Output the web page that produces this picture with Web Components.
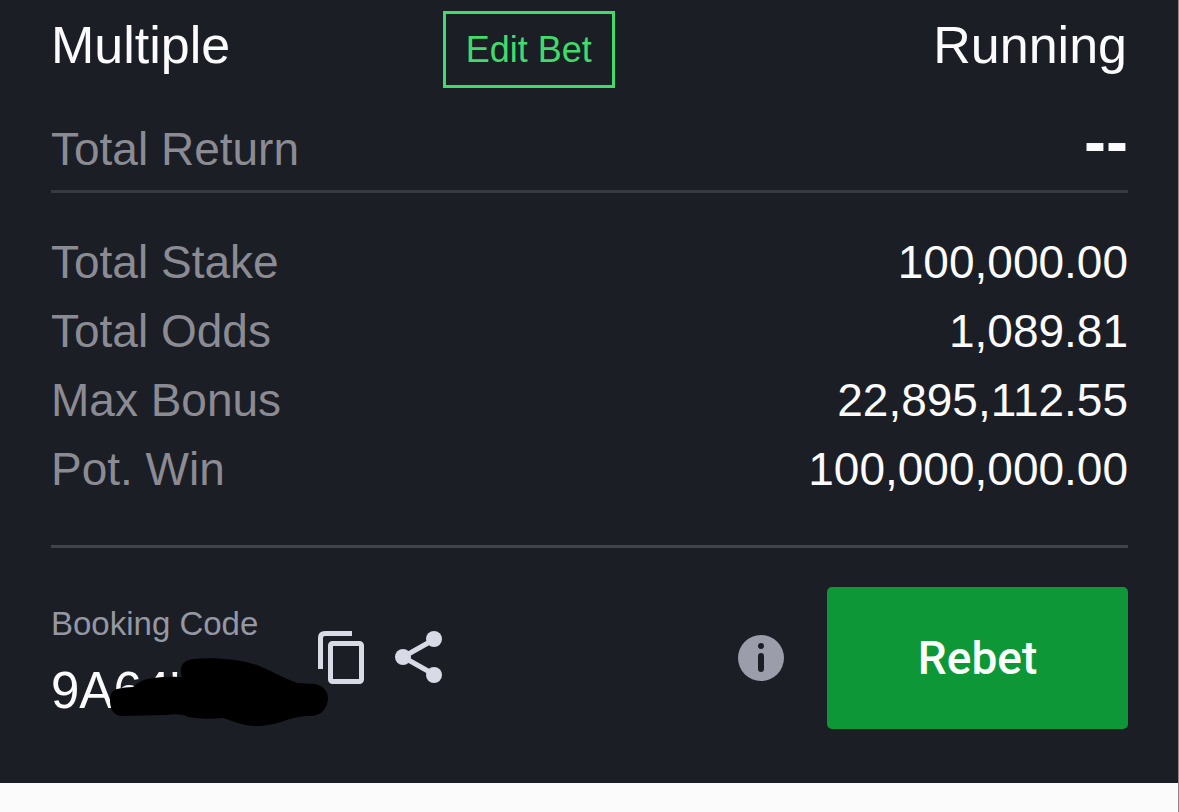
<!DOCTYPE html>
<html lang="en">
<head>
<meta charset="utf-8">
<meta name="viewport" content="width=device-width">
<title>Bet details</title>
<style>
body { margin: 0; box-sizing: border-box; min-height: 100vh; border-right: 1px solid #8a8a8a; background: #fbfbfb; color: #fbfbfd; font-family: "Liberation Sans", Arial, sans-serif; }
</style>
</head>
<body>
<bet-ticket>
  <ticket-header slot="header" status="Running">Multiple</ticket-header>
  <amount-row slot="return" emphasis label="Total Return">--</amount-row>
  <amount-row label="Total Stake">100,000.00</amount-row>
  <amount-row label="Total Odds">1,089.81</amount-row>
  <amount-row label="Max Bonus">22,895,112.55</amount-row>
  <amount-row label="Pot. Win">100,000,000.00</amount-row>
  <booking-bar slot="footer" label="Booking Code">9A64'</booking-bar>
</bet-ticket>

<script>
const mount = (el, html) => { el.attachShadow({ mode: "open" }).innerHTML = html; };

customElements.define("bet-ticket", class extends HTMLElement {
  constructor() {
    super();
    mount(this, `<style>
      :host { display: block; margin-right: -1px; background: #1c1e26; padding: 11px 51px 55px; }
      .return { margin-top: 27px; padding-bottom: 6px; border-bottom: 3px solid #383a43; }
      .amounts { padding: 35px 0 41px; border-bottom: 3px solid #41434b; }
      .footer { padding-top: 39px; }
    </style>
    <slot name="header"></slot>
    <div class="return"><slot name="return"></slot></div>
    <div class="amounts"><slot></slot></div>
    <div class="footer"><slot name="footer"></slot></div>`);
  }
});

customElements.define("ticket-header", class extends HTMLElement {
  constructor() {
    super();
    mount(this, `<style>
      :host { display: grid; grid-template-columns: 4fr 7fr; font-size: 52px; line-height: 68px; }
      h1 { margin: 0; font: inherit; }
      .side { display: flex; justify-content: space-between; align-items: flex-start; padding-right: 1px; }
      button { box-sizing: border-box; height: 77px; padding: 0 20px; border: 3px solid #3fdc6c; background: none;
        color: #3fdc6c; font: 36px "Liberation Sans", Arial, sans-serif; white-space: nowrap; }
    </style>
    <h1><slot></slot></h1>
    <div class="side"><button type="button">Edit Bet</button><span id="status"></span></div>`);
  }
  connectedCallback() { this.shadowRoot.getElementById("status").textContent = this.getAttribute("status"); }
});

customElements.define("amount-row", class extends HTMLElement {
  constructor() {
    super();
    mount(this, `<style>
      :host { display: flex; justify-content: space-between; font-size: 46px; line-height: 69px; height: 69px; }
      #label { color: #8b8b94; }
      :host([emphasis]) .value { font-size: 66px; line-height: 52px; font-weight: 700; }
    </style>
    <span id="label"></span><span class="value"><slot></slot></span>`);
  }
  connectedCallback() { this.shadowRoot.getElementById("label").textContent = this.getAttribute("label"); }
});

customElements.define("icon-button", class extends HTMLElement {
  constructor() {
    super();
    mount(this, `<style>
      :host { display: block; }
      button { display: block; padding: 0; border: 0; background: none; color: inherit; }
    </style><button type="button"><slot></slot></button>`);
  }
  connectedCallback() { this.shadowRoot.querySelector("button").setAttribute("aria-label", this.getAttribute("label")); }
});

customElements.define("booking-bar", class extends HTMLElement {
  constructor() {
    super();
    mount(this, `<style>
      :host { display: flex; align-items: center; height: 141px; color: #d8dbe5; }
      svg { display: block; }
      .code { position: relative; width: 266px; align-self: flex-start; padding-top: 17px; }
      #label { color: #9498a2; font-size: 33px; line-height: 40px; }
      .number { color: #fbfbfd; font-size: 51px; line-height: 60px; padding-top: 17px; }
      .mask { position: absolute; left: 59px; top: 71px; }
      .share { margin-left: 29px; }
      .info { margin: 0 42px 0 auto; color: #9c9daa; }
      .rebet { width: 301px; height: 142px; border: 0; border-radius: 5px; background: #0e9737; color: #fbfffb;
        font: 500 46px Roboto, sans-serif; }
    </style>
    <div class="code">
      <div id="label"></div>
      <div class="number"><slot></slot></div>
      <svg class="mask" width="218" height="69" viewBox="110 658 218 69" aria-hidden="true">
        <path d="M117 689Q125 687 133 687Q141 679 153 678Q168 676 182 677C178 666 184 660 193 659C214 657 238 659 257 665C270 670 283 678 297 683L315 684Q328 687 328 699Q326 717 307 716Q293 717 281 722Q259 729 241 724L223 718Q203 720 188 717Q181 713 166 715L121 716Q111 715 110 702Q109 691 117 689Z" fill="#000"/>
      </svg>
    </div>
    <icon-button label="Copy">
      <svg width="48" height="54" viewBox="0 0 48 54" fill="none" stroke="currentColor" stroke-width="5">
        <path d="M3.500 38V7Q3.500 2.500 8 2.500H35"/><rect x="13.500" y="12.500" width="31" height="38" rx="2"/>
      </svg>
    </icon-button>
    <icon-button class="share" label="Share">
      <svg width="49" height="54" viewBox="0 0 49 54" fill="currentColor">
        <path d="M41 8L9 26L41 44" fill="none" stroke="currentColor" stroke-width="5"/>
        <circle cx="40" cy="8" r="8"/><circle cx="9" cy="26" r="8"/><circle cx="40" cy="44" r="8"/>
      </svg>
    </icon-button>
    <icon-button class="info" label="Information">
      <svg width="48" height="48" viewBox="0 0 48 48">
        <circle cx="24" cy="24" r="23" fill="currentColor"/><circle cx="24" cy="12" r="3" fill="#1c1e26"/>
        <path d="M24 22V35" stroke="#1c1e26" stroke-width="6" stroke-linecap="round"/>
      </svg>
    </icon-button>
    <button class="rebet" type="button">Rebet</button>`);
  }
  connectedCallback() { this.shadowRoot.getElementById("label").textContent = this.getAttribute("label"); }
});
</script>
</body>
</html>
